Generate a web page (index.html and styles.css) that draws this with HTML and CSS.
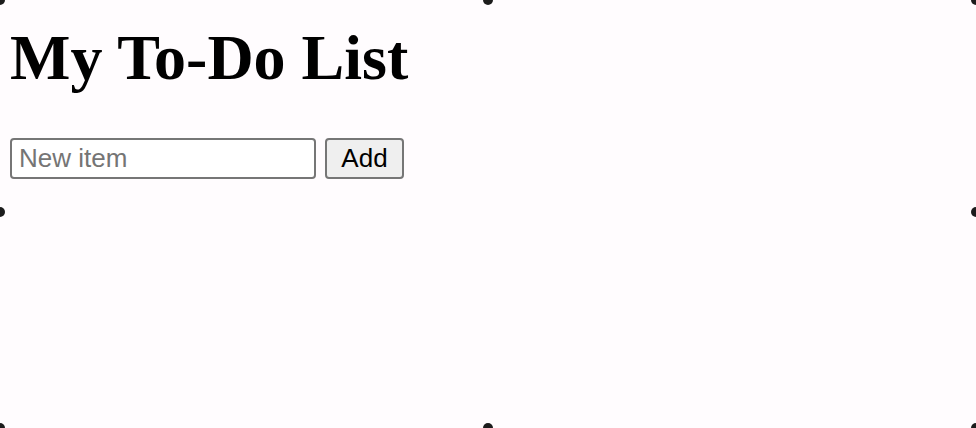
FILE: index.html
```html
<!DOCTYPE html>
<html>
<head>
<meta charset="utf-8">
<title>My To-Do List</title>
<link rel="stylesheet" href="styles.css">
</head>
<body>
<main class="app">
  <h1 class="title">My To-Do List</h1>
  <form class="add-form" onsubmit="return false;">
    <input class="item-input" type="text" placeholder="New item">
    <button class="add-btn" type="submit">Add</button>
  </form>
  <ul class="list"></ul>
</main>
<div class="handle h-tl"></div>
<div class="handle h-tc"></div>
<div class="handle h-tr"></div>
<div class="handle h-ml"></div>
<div class="handle h-mr"></div>
<div class="handle h-bl"></div>
<div class="handle h-bc"></div>
<div class="handle h-br"></div>
</body>
</html>
```
FILE: styles.css
```css
html, body {
  margin: 0;
  padding: 0;
  height: 100%;
  overflow: hidden;
}
body {
  background: #fffcfe;
  font-family: "Liberation Serif", "Times New Roman", serif;
  color: #000;
  position: relative;
}
.app {
  padding: 0 0 0 10px;
}
.title {
  font-family: "Liberation Serif", "Times New Roman", serif;
  font-weight: bold;
  font-size: 64px;
  line-height: 74px;
  margin: 21px 0 0 0;
}
.add-form {
  display: flex;
  align-items: center;
  gap: 9px;
  margin-top: 43px;
}
.item-input {
  box-sizing: border-box;
  width: 306px;
  height: 41px;
  border: 2px solid #767676;
  border-radius: 4px;
  padding: 0 7px;
  font-family: "Liberation Sans", Arial, sans-serif;
  font-size: 26px;
  color: #000;
  background: #fff;
  margin: 0;
}
.item-input::placeholder {
  color: #757575;
}
.add-btn {
  box-sizing: border-box;
  height: 41px;
  width: 79px;
  border: 2px solid #767676;
  border-radius: 4px;
  background: #efefef;
  font-family: "Liberation Sans", Arial, sans-serif;
  font-size: 26px;
  color: #000;
  padding: 0;
  margin: 0;
}
.list {
  margin: 0;
  padding: 0;
}
.handle {
  position: absolute;
  width: 10px;
  height: 10px;
  border-radius: 50%;
  background: #1c1c1c;
  transform: translate(-50%, -50%);
}
.h-tl { left: 0; top: 0; }
.h-tc { left: 488px; top: 0; }
.h-tr { left: 976px; top: 0; }
.h-ml { left: 0; top: 212px; }
.h-mr { left: 976px; top: 212px; }
.h-bl { left: 0; top: 428px; }
.h-bc { left: 488px; top: 428px; }
.h-br { left: 976px; top: 428px; }
```
